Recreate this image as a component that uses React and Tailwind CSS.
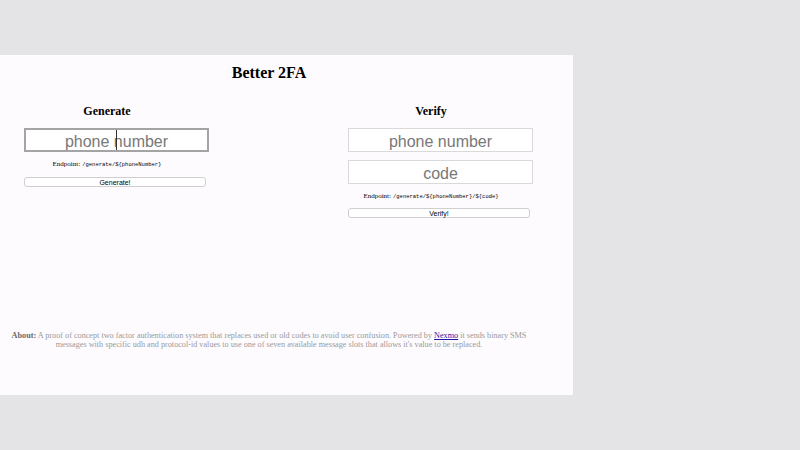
import React from "react";

const serif = { fontFamily: '"Liberation Serif", "Times New Roman", serif' };

function Endpoint({ path }) {
  return (
    <div className="flex h-[8px] items-baseline justify-center gap-[2px] pt-[1px] text-black" style={serif}>
      <span className="text-[7px] leading-[7px]">Endpoint:</span>
      <code className="text-[5.5px] leading-[7px] font-['Liberation_Mono',monospace]">{path}</code>
    </div>
  );
}

function Btn({ children }) {
  return (
    <button className="ml-[24px] flex h-[10px] w-[182px] items-center justify-center rounded-[3px] border border-[#cfcfcf] bg-white text-[7px] leading-none text-black font-['Liberation_Sans',Arial,sans-serif]">
      {children}
    </button>
  );
}

function Field({ placeholder, focused }) {
  return (
    <input
      placeholder={placeholder}
      className={
        "ml-[24px] block h-[24px] w-[185px] bg-white pt-[3px] text-center text-[16px] leading-none outline-none placeholder:text-[#787878] font-['Liberation_Sans',Arial,sans-serif] " +
        (focused ? "border-2 border-[#a4a4a4]" : "border border-[#d9d9d9]")
      }
    />
  );
}

export default function App() {
  return (
    <div className="min-h-[450px] w-[800px] bg-[#e4e3e5] pt-[55px]">
      <div className="h-[340px] w-[573px] bg-[#fdfbfe]">
        <div className="w-[538px] pt-[10px]">
          <h1 className="text-center text-[16px] font-bold leading-[16px] text-black" style={serif}>
            Better 2FA
          </h1>
          <div className="mt-[24px] flex">
            <div className="w-[214px]">
              <h2 className="text-center text-[12px] font-bold leading-[12px] text-black" style={serif}>
                Generate
              </h2>
              <div className="relative mt-[11px]">
                <Field placeholder="phone number" focused />
                <div className="absolute left-[116px] top-[2px] h-[20px] w-[1px] bg-[#333]" />
              </div>
              <div className="mt-[8px]">
                <Endpoint path="/generate/${phoneNumber}" />
              </div>
              <div className="mt-[9px]">
                <Btn>Generate!</Btn>
              </div>
            </div>
            <div className="w-[110px]" />
            <div className="w-[214px]">
              <h2 className="text-center text-[12px] font-bold leading-[12px] text-black" style={serif}>
                Verify
              </h2>
              <div className="mt-[11px]">
                <Field placeholder="phone number" />
              </div>
              <div className="mt-[8px]">
                <Field placeholder="code" />
              </div>
              <div className="mt-[8px]">
                <Endpoint path="/generate/${phoneNumber}/${code}" />
              </div>
              <div className="mt-[8px]">
                <Btn>Verify!</Btn>
              </div>
            </div>
          </div>
          <p className="mt-[113px] text-center text-[8.2px] leading-[9px] text-[#9a9a9a]" style={serif}>
            <b className="text-[#6a6a6a]">About:</b> A proof of concept two factor authentication system that replaces used or old codes to avoid user confusion. Powered by{" "}
            <a href="#" className="text-[#1a1aa6] underline">Nexmo</a> it sends binary SMS
            <br />
            messages with specific udh and protocol-id values to use one of seven available message slots that allows it's value to be replaced.
          </p>
        </div>
      </div>
    </div>
  );
}
